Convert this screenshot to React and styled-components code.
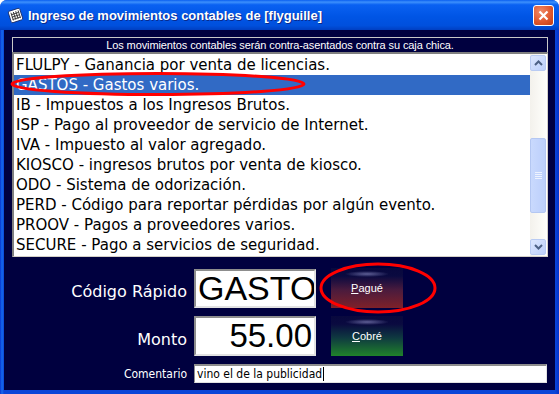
import styled, { createGlobalStyle } from 'styled-components';

const GlobalStyle = createGlobalStyle`
    html, body {
        margin: 0;
        padding: 0;
        background: #ffffff;
    }
    * {
        box-sizing: border-box;
    }
`;

const CONCEPTS = [
    ['FLULPY', 'Ganancia por venta de licencias.'],
    ['GASTOS', 'Gastos varios.'],
    ['IB', 'Impuestos a los Ingresos Brutos.'],
    ['ISP', 'Pago al proveedor de servicio de Internet.'],
    ['IVA', 'Impuesto al valor agregado.'],
    ['KIOSCO', 'ingresos brutos por venta de kiosco.'],
    ['ODO', 'Sistema de odorización.'],
    ['PERD', 'Código para reportar pérdidas por algún evento.'],
    ['PROOV', 'Pagos a proveedores varios.'],
    ['SECURE', 'Pago a servicios de seguridad.'],
];

const Window = styled.div`
    position: relative;
    width: 559px;
    height: 394px;
    display: flex;
    flex-direction: column;
    border-radius: 7px 7px 0 0;
    overflow: hidden;
    background: #0a46d8;
`;

const TitleBar = styled.div`
    height: 30px;
    flex: none;
    display: flex;
    align-items: center;
    padding: 0 5px 0 7px;
    background: linear-gradient(
        180deg,
        #0a5ff0 0%,
        #3d90fc 7%,
        #0a61f2 16%,
        #0055e5 55%,
        #0050dd 85%,
        #003fc2 100%
    );
`;

const Title = styled.span`
    flex: 1;
    margin-left: 4px;
    padding-top: 1px;
    color: #ffffff;
    font-family: 'Liberation Sans', Arial, sans-serif;
    font-weight: bold;
    font-size: 13px;
    text-shadow: 1px 1px 0 #0a2a8c;
    white-space: nowrap;
`;

const CloseButton = styled.div`
    width: 21px;
    height: 21px;
    margin-top: 1px;
    border: 1px solid #ffffff;
    border-radius: 3px;
    background: radial-gradient(circle at 35% 30%, #ef8a68 0%, #e0582f 55%, #c23c12 100%);
    display: flex;
    align-items: center;
    justify-content: center;
`;

const Frame = styled.div`
    flex: 1;
    display: flex;
    padding: 0 4px 4px 4px;
    background: linear-gradient(90deg, #0834d0 0, #166aee 2px, #0a46d8 4px, #0a46d8 calc(100% - 4px), #0632c8 100%);
`;

const Client = styled.div`
    flex: 1;
    display: flex;
    flex-direction: column;
    padding: 7px 7px 0 8px;
    background: #00003f;
`;

const ListPanel = styled.div`
    display: flex;
    flex-direction: column;
`;

const ListHeader = styled.div`
    height: 15px;
    display: flex;
    align-items: center;
    justify-content: center;
    border-top: 1px solid #c8c8c8;
    border-left: 1px solid #c8c8c8;
    border-right: 1px solid #c8c8c8;
    color: #ffffff;
    font-family: 'Liberation Sans', Arial, sans-serif;
    font-size: 11px;
    letter-spacing: -0.1px;
    white-space: nowrap;
`;

const ListBox = styled.div`
    height: 205px;
    display: flex;
    background: #ffffff;
    border-top: 2px solid #808080;
    border-left: 2px solid #808080;
    border-bottom: 1px solid #d4d0c8;
    border-right: 1px solid #d4d0c8;
`;

const Items = styled.div`
    flex: 1;
    padding-top: 1px;
    overflow: hidden;
`;

const Item = styled.div`
    height: 20px;
    line-height: 20px;
    padding-left: 2px;
    font-family: 'DejaVu Sans', Verdana, sans-serif;
    font-size: 15px;
    white-space: nowrap;
    color: ${({ selected }) => (selected ? '#ffffff' : '#000000')};
    background: ${({ selected }) => (selected ? '#316ac5' : 'transparent')};
`;

const ScrollBar = styled.div`
    width: 16px;
    margin-right: 1px;
    display: flex;
    flex-direction: column;
    padding: 1px 0 1px 0;
    background: linear-gradient(90deg, #f3f1ec, #fefefb);
`;

const ScrollButton = styled.div`
    height: 16px;
    flex: none;
    border: 1px solid #b9cbf3;
    border-radius: 2px;
    background: linear-gradient(135deg, #dde7fe, #bccffb);
    display: flex;
    align-items: center;
    justify-content: center;
`;

const Track = styled.div`
    flex: 1;
    display: flex;
    flex-direction: column;
    padding-top: ${({ offset }) => offset}px;
`;

const Thumb = styled.div`
    height: ${({ size }) => size}px;
    border: 1px solid #b4c7f2;
    border-radius: 2px;
    background: linear-gradient(90deg, #c9d9fd, #bccffb);
    display: flex;
    align-items: center;
    justify-content: center;
`;

const Form = styled.div`
    margin-top: 12px;
    display: grid;
    grid-template-columns: 176px 122px 81px 1fr;
    grid-template-rows: 39px 40px 19px;
    column-gap: 6px;
    row-gap: 8px;
`;

const Label = styled.div`
    align-self: end;
    text-align: right;
    color: #ffffff;
    font-family: ${({ small }) =>
        small ? "'Liberation Sans Narrow', 'DejaVu Sans Condensed', sans-serif" : "'DejaVu Sans', Verdana, sans-serif"};
    font-size: ${({ small }) => (small ? '12px' : '16px')};
    padding-bottom: ${({ small }) => (small ? '2px' : '7px')};
    padding-right: 1px;
    white-space: nowrap;
`;

const BigInput = styled.div`
    background: #ffffff;
    border-top: 2px solid #8d8d8d;
    border-left: 2px solid #8d8d8d;
    border-bottom: 2px solid #e2e2e2;
    border-right: 2px solid #e2e2e2;
    overflow: hidden;
    display: flex;
    align-items: center;
    justify-content: ${({ align }) => (align === 'right' ? 'flex-end' : 'flex-start')};
    padding: 0 2px;
    color: #000000;
    font-family: 'Liberation Sans', Arial, sans-serif;
    font-size: ${({ size }) => size}px;
    white-space: nowrap;
`;

const CommentInput = styled.div`
    grid-column: 2 / -1;
    margin-right: 1px;
    background: #ffffff;
    border-top: 2px solid #8d8d8d;
    border-left: 1px solid #8d8d8d;
    border-bottom: 1px solid #e2e2e2;
    border-right: 1px solid #e2e2e2;
    display: flex;
    align-items: center;
    padding-left: 2px;
    color: #000000;
    font-family: 'Liberation Sans Narrow', 'DejaVu Sans Condensed', sans-serif;
    font-size: 12px;
    white-space: nowrap;
`;

const Caret = styled.span`
    display: inline-block;
    width: 1px;
    height: 14px;
    margin-left: 1px;
    background: #000000;
`;

const ActionButton = styled.div`
    margin-left: 9px;
    align-self: ${({ tone }) => (tone === 'red' ? 'end' : 'start')};
    height: 40px;
    display: flex;
    align-items: center;
    justify-content: center;
    color: #ffffff;
    font-family: 'Liberation Sans', Arial, sans-serif;
    font-size: 11px;
    background:
        radial-gradient(ellipse 22px 3px at 50% 6px, rgba(200, 200, 255, 0.45), rgba(120, 120, 200, 0) 100%),
        linear-gradient(
            180deg,
            #08083e 0%,
            #0a0a40 20%,
            ${({ tone }) => (tone === 'red' ? '#4a1b3d 55%, #7e2129 100%' : '#0f3a40 55%, #20822a 100%')}
        );

    & u {
        text-decoration: underline;
    }
`;

const Annotations = styled.svg`
    position: absolute;
    left: 0;
    top: 0;
    pointer-events: none;
`;

const AppIcon = () => (
    <svg width="17" height="17" viewBox="0 0 17 17">
        <g transform="rotate(-18 8.5 8.5)">
            <rect x="2.5" y="2.5" width="12" height="12" rx="1.5" fill="#ffffff" stroke="#1a2a60" strokeWidth="0.8" />
            <path
                d="M5 4.5v8M7.5 4.5v8M10 4.5v8M12.5 4.5v8M4.5 6.5h8M4.5 9h8M4.5 11.5h8"
                stroke="#3a3a3a"
                strokeWidth="0.9"
            />
        </g>
    </svg>
);

const Arrow = ({ up }) => (
    <svg width="9" height="6" viewBox="0 0 9 6">
        <path
            d={up ? 'M1 5 L4.5 1.5 L8 5' : 'M1 1 L4.5 4.5 L8 1'}
            fill="none"
            stroke="#4d6185"
            strokeWidth="2"
        />
    </svg>
);

const Grip = () => (
    <svg width="7" height="7" viewBox="0 0 7 7">
        <path d="M0 0.5h7M0 2.5h7M0 4.5h7M0 6.5h7" stroke="#eef3ff" strokeWidth="1" />
    </svg>
);

const App = () => {
    return (
        <>
            <GlobalStyle />
            <Window>
                <TitleBar>
                    <AppIcon />
                    <Title>Ingreso de movimientos contables de [flyguille]</Title>
                    <CloseButton>
                        <svg width="11" height="11" viewBox="0 0 11 11">
                            <path d="M1.5 1.5 L9.5 9.5 M9.5 1.5 L1.5 9.5" stroke="#ffffff" strokeWidth="2.2" />
                        </svg>
                    </CloseButton>
                </TitleBar>
                <Frame>
                    <Client>
                        <ListPanel>
                            <ListHeader>
                                Los movimientos contables serán contra-asentados contra su caja chica.
                            </ListHeader>
                            <ListBox>
                                <Items>
                                    {CONCEPTS.map(([code, text]) => (
                                        <Item key={code} selected={code === 'GASTOS'}>
                                            {code} - {text}
                                        </Item>
                                    ))}
                                </Items>
                                <ScrollBar>
                                    <ScrollButton>
                                        <Arrow up />
                                    </ScrollButton>
                                    <Track offset={67}>
                                        <Thumb size={75}>
                                            <Grip />
                                        </Thumb>
                                    </Track>
                                    <ScrollButton>
                                        <Arrow />
                                    </ScrollButton>
                                </ScrollBar>
                            </ListBox>
                        </ListPanel>
                        <Form>
                            <Label>Código Rápido</Label>
                            <BigInput size={34}>GASTOS</BigInput>
                            <ActionButton tone="red">
                                <span>
                                    <u>P</u>agué
                                </span>
                            </ActionButton>
                            <div />
                            <Label>Monto</Label>
                            <BigInput size={33} align="right">
                                55.00
                            </BigInput>
                            <ActionButton tone="green">
                                <span>
                                    <u>C</u>obré
                                </span>
                            </ActionButton>
                            <div />
                            <Label small>Comentario</Label>
                            <CommentInput>
                                vino el de la publicidad
                                <Caret />
                            </CommentInput>
                        </Form>
                    </Client>
                </Frame>
                <Annotations width="559" height="394">
                    <ellipse cx="158" cy="84" rx="146" ry="10.5" fill="none" stroke="#ff0000" strokeWidth="3" />
                    <ellipse cx="378" cy="288" rx="57" ry="24" fill="none" stroke="#ff0000" strokeWidth="3" />
                </Annotations>
            </Window>
        </>
    );
};

export default App;
